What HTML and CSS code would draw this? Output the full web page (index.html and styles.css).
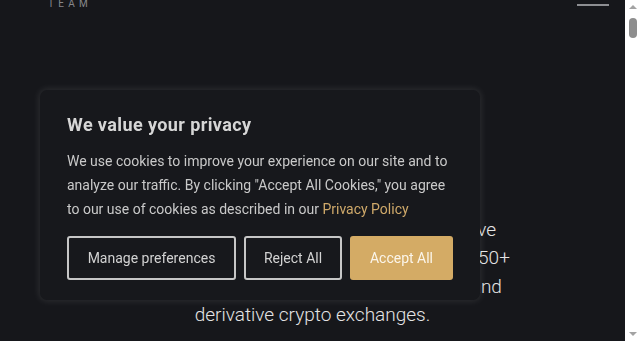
FILE: index.html
```html
<!DOCTYPE html>
<html lang="en">
<head>
<meta charset="utf-8">
<title>Team</title>
<link rel="stylesheet" href="styles.css">
</head>
<body>
<header class="header">
  <div class="logo">
    <span class="logo-mark">LOGO</span>
    <span class="logo-sub">TEAM</span>
  </div>
  <button class="menu" aria-label="Menu">
    <span class="bar"></span>
    <span class="bar"></span>
  </button>
</header>
<main class="hero">
  <p class="lead">A team of engineers and investors who have<br>designed, built, launched and operated over 50+<br>of the world's top trusted centralized spot and<br>derivative crypto exchanges.</p>
</main>
<div class="cookie" role="dialog" aria-label="Cookie consent">
  <h2 class="cookie-title">We value your privacy</h2>
  <p class="cookie-text">We use cookies to improve your experience on our site and to analyze our traffic. By clicking "Accept All Cookies," you agree to our use of cookies as described in our <a class="cookie-link" href="#">Privacy Policy</a></p>
  <div class="cookie-actions">
    <button class="btn btn-outline btn-manage">Manage preferences</button>
    <button class="btn btn-outline btn-reject">Reject All</button>
    <button class="btn btn-accept">Accept All</button>
  </div>
</div>
<div class="scrollbar" aria-hidden="true">
  <span class="arrow arrow-up"></span>
  <span class="track"><span class="thumb"></span></span>
  <span class="arrow arrow-down"></span>
</div>
</body>
</html>
```
FILE: styles.css
```css
html, body {
  margin: 0;
  padding: 0;
}
body {
  background: #16171b;
  font-family: Roboto, "Liberation Sans", sans-serif;
  color: #e2e2e2;
  padding-right: 15px;
  overflow: hidden;
  height: 341px;
  box-sizing: border-box;
}
.header {
  display: flex;
  justify-content: space-between;
  align-items: flex-end;
  padding: 0 16px 0 48px;
  margin-top: -30px;
  height: 39px;
}
.logo {
  display: flex;
  flex-direction: column;
}
.logo-mark {
  font-size: 16px;
  color: #9a9a9a;
  height: 20px;
}
.logo-sub {
  font-size: 10px;
  letter-spacing: 4.3px;
  color: #86878a;
  line-height: 10px;
}
.menu {
  background: none;
  border: 0;
  padding: 0;
  width: 32px;
  display: flex;
  flex-direction: column;
  gap: 8px;
  margin-bottom: 3px;
}
.bar {
  display: block;
  height: 2px;
  background: #8d8e92;
  width: 32px;
}
.hero {
  display: flex;
  justify-content: center;
  padding-top: 207px;
}
.lead {
  margin: 0;
  text-align: center;
  font-size: 19px;
  line-height: 28.4px;
  color: #e4e4e4;
  font-weight: 300;
}
.cookie {
  position: fixed;
  left: 40px;
  top: 90px;
  width: 440px;
  box-sizing: border-box;
  padding: 24px 27px 20px;
  background: #17181c;
  border-radius: 7px;
  box-shadow: 0 0 7px 1px rgba(255, 255, 255, 0.1);
}
.cookie-title {
  margin: 0 0 13px;
  font-size: 18px;
  line-height: 22px;
  font-weight: 700;
  letter-spacing: 0.4px;
  color: #d6d6d6;
}
.cookie-text {
  margin: 0 0 15px;
  font-size: 14px;
  line-height: 24px;
  color: #c9c9c9;
}
.cookie-link {
  color: #cfa96a;
  text-decoration: none;
}
.cookie-actions {
  display: flex;
  gap: 8px;
}
.btn {
  height: 44px;
  box-sizing: border-box;
  font-family: inherit;
  font-size: 14px;
  border-radius: 3px;
  padding: 0;
}
.btn-outline {
  background: transparent;
  border: 2px solid #c6c6c6;
  color: #d2d2d2;
}
.btn-manage { width: 169px; }
.btn-reject { width: 98px; }
.btn-accept {
  width: 103px;
  border: 0;
  background: #d4ab65;
  color: #fbf5ea;
}
.scrollbar {
  position: fixed;
  top: 0;
  right: 0;
  width: 15px;
  height: 341px;
  background: #ffffff;
  display: flex;
  flex-direction: column;
  align-items: center;
}
.arrow {
  width: 0;
  height: 0;
  border-left: 4px solid transparent;
  border-right: 4px solid transparent;
  margin: 5px 0;
}
.arrow-up {
  border-bottom: 4px solid #a3a3a3;
}
.arrow-down {
  border-top: 4px solid #a3a3a3;
}
.track {
  flex: 1;
  width: 100%;
  display: flex;
  justify-content: center;
}
.thumb {
  display: block;
  width: 8px;
  height: 20px;
  margin-top: 4px;
  border-radius: 4px;
  background: #8e8e8e;
}
```
